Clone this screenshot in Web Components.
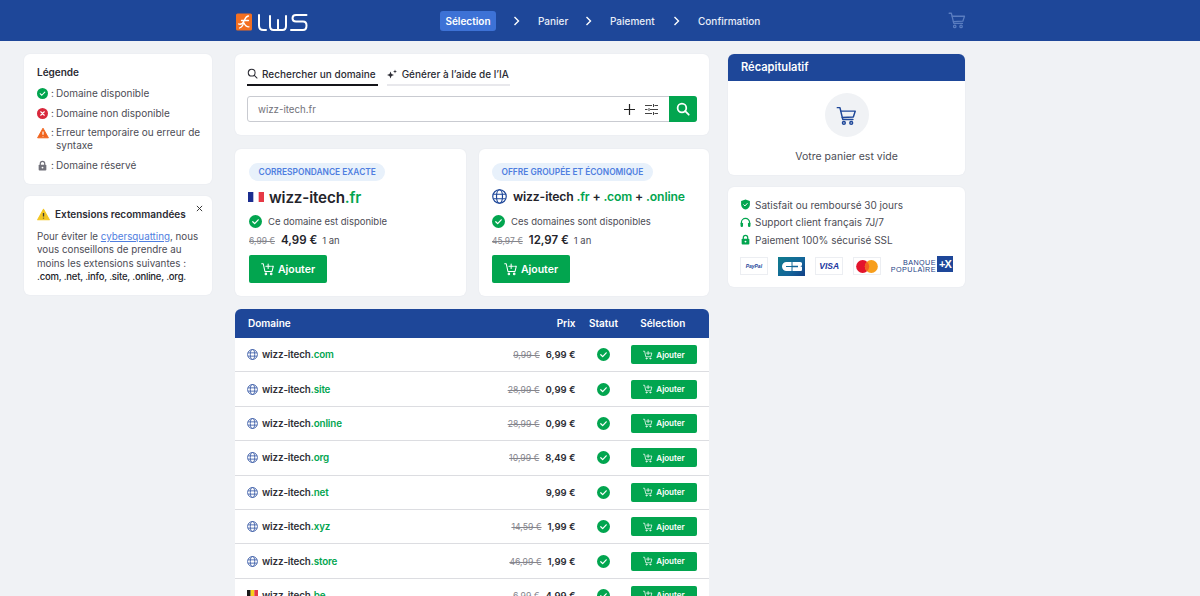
<!DOCTYPE html>
<html lang="fr">
<head>
<meta charset="utf-8">
<title>LWS</title>
<style>
  html, body { margin: 0; height: 596px; overflow: hidden; background: #f0f2f5; }
  body { font-family: Inter, "Liberation Sans", sans-serif; color: #2b2b33; }
  lws-page { height: 596px; overflow: hidden; }
</style>
</head>
<body>
<lws-page>
  <lws-header></lws-header>
  <div slot="left">
    <lws-legend></lws-legend>
    <lws-reco></lws-reco>
  </div>
  <div slot="mid">
    <lws-search></lws-search>
    <lws-offers></lws-offers>
    <lws-table></lws-table>
  </div>
  <div slot="right">
    <lws-recap></lws-recap>
    <lws-trust></lws-trust>
  </div>
</lws-page>

<script>
const GREEN = '#02a54f';
const BLUE = '#1e4799';

const icons = {
  check: s => `<svg width="${s}" height="${s}" viewBox="0 0 20 20"><circle cx="10" cy="10" r="10" fill="${GREEN}"/><path d="M5.8 10.4l2.9 2.8 5.5-5.8" fill="none" stroke="#fff" stroke-width="1.9" stroke-linecap="round" stroke-linejoin="round"/></svg>`,
  cross: s => `<svg width="${s}" height="${s}" viewBox="0 0 20 20"><circle cx="10" cy="10" r="10" fill="#d9283c"/><path d="M6.8 6.8l6.4 6.4M13.2 6.8l-6.4 6.4" stroke="#fff" stroke-width="2" stroke-linecap="round"/></svg>`,
  warn: (s, c) => `<svg width="${s}" height="${s}" viewBox="0 0 20 20"><path d="M10 2L19 18H1z" fill="${c}" stroke="${c}" stroke-width="1.6" stroke-linejoin="round"/><path d="M10 7.5v5.5M10 15v1" stroke="${c === '#f3c623' ? '#3b3b3b' : '#fff'}" stroke-width="2"/></svg>`,
  lock: (s, c) => `<svg width="${s}" height="${s}" viewBox="0 0 20 20"><path d="M6 9V6.5a4 4 0 0 1 8 0V9" fill="none" stroke="${c}" stroke-width="2.2"/><rect x="3" y="8.5" width="14" height="10.5" rx="1.6" fill="${c}"/><circle cx="10" cy="13.8" r="1.7" fill="#fff"/></svg>`,
  globe: (s, c) => `<svg width="${s}" height="${s}" viewBox="0 0 20 20" fill="none" stroke="${c}" stroke-width="1.6"><circle cx="10" cy="10" r="9"/><ellipse cx="10" cy="10" rx="4" ry="9"/><path d="M1.8 7h16.4M1.8 13h16.4"/></svg>`,
  cartPlus: s => `<svg width="${s}" height="${s}" viewBox="0 0 20 20" fill="none" stroke="#fff" stroke-width="1.5" stroke-linecap="round" stroke-linejoin="round"><path d="M1 2.5h2.2l2.4 11h10.2l1.8-7.5h-2.4"/><path d="M10.2 3v6.4M7 6.2h6.4"/><circle cx="7" cy="17" r="1.1"/><circle cx="14.6" cy="17" r="1.1"/></svg>`,
  cart: (s, c) => `<svg width="${s}" height="${s}" viewBox="0 0 24 24" fill="none" stroke="${c}" stroke-width="1.7" stroke-linecap="round" stroke-linejoin="round"><path d="M1.5 3h3l3.2 13.5h11.6"/><path d="M5.6 7h16.4l-2.2 6.6-12.6.6"/><circle cx="9" cy="20.5" r="1.6"/><circle cx="17.4" cy="20.5" r="1.6"/></svg>`,
  search: (s, c, w) => `<svg width="${s}" height="${s}" viewBox="0 0 20 20" fill="none" stroke="${c}" stroke-width="${w}" stroke-linecap="round"><circle cx="8.5" cy="8.5" r="6.2"/><path d="M13.2 13.2l5 5"/></svg>`,
  flagFr: (w, h) => `<svg width="${w}" height="${h}" viewBox="0 0 3 2" preserveAspectRatio="none"><rect width="1" height="2" fill="#1b2d8f"/><rect x="2" width="1" height="2" fill="#e63946"/></svg>`,
  flagBe: (w, h) => `<svg width="${w}" height="${h}" viewBox="0 0 3 2" preserveAspectRatio="none"><rect width="1" height="2" fill="#1a1a1a"/><rect x="1" width="1" height="2" fill="#f7d117"/><rect x="2" width="1" height="2" fill="#e63946"/></svg>`
};

// html gets the element once it is in the page, so it can read its attributes
function define(name, css, html) {
  customElements.define(name, class extends HTMLElement {
    connectedCallback() {
      if (this.shadowRoot) return;
      const root = this.attachShadow({ mode: 'open' });
      root.innerHTML = `<style>${css}</style>${typeof html === 'function' ? html(this) : html}`;
    }
  });
}

const cardCss = `
  :host { display: block; background: #fff; border-radius: 6px; box-shadow: 0 0 2px rgba(30,50,90,.06); }
`;

define('lws-page', `
  :host { display: block; }
  .cols { display: flex; padding: 13px 0 0 24px; align-items: flex-start; }
  .l { width: 188px; margin-right: 23px; }
  .m { width: 474px; margin-right: 19px; }
  .r { width: 237px; }
`, `
  <slot></slot>
  <div class="cols">
    <div class="l"><slot name="left"></slot></div>
    <div class="m"><slot name="mid"></slot></div>
    <div class="r"><slot name="right"></slot></div>
  </div>
`);

define('lws-header', `
  :host { display: flex; align-items: center; height: 41px; background: ${BLUE}; color: #fff; padding-left: 235px; font-size: 10px; font-weight: 500; box-sizing: border-box; width: 1200px; }
  .logo { width: 73px; height: 20px; display: block; margin-right: 132px; }
  nav { display: flex; align-items: center; }
  .step { color: #e8edf7; white-space: nowrap; }
  .on { background: #3d72d6; color: #fff; font-weight: 600; border-radius: 3px; height: 20px; width: 56px; display: flex; align-items: center; justify-content: center; }
  .chev { width: 8px; height: 10px; margin: 0 17px 0 17px; display: block; }
  .bag { margin-left: 187px; display: block; }
`, () => {
  const chev = `<svg class="chev" viewBox="0 0 8 10" fill="none" stroke="#fff" stroke-width="1.4"><path d="M1.5 1l4 4-4 4"/></svg>`;
  return `
  <svg class="logo" viewBox="0 0 73 20">
    <rect x="1" y="2.500" width="16" height="17" rx="1.500" fill="#f36f21"/>
    <path d="M3.500 13c2.500.8 4.300-.5 5.500-3s2-5 4.500-5M6.500 9.500h7M8.500 10.500c0 3-1.200 5.500-4 6.500M9 12c1 2.500 2.500 3.800 5 3.800" fill="none" stroke="#fff" stroke-width="1.300" stroke-linecap="round"/>
    <g fill="none" stroke="#fff" stroke-width="2" stroke-linecap="round" stroke-linejoin="round">
      <path d="M24 4v10.500c0 3 1.500 4.500 4.500 4.500H31"/>
      <path d="M35 5v10c0 2.500 1.200 4 3.500 4h9c2.300 0 3.500-1.500 3.500-4V5M43 9v10"/>
      <path d="M71.500 4H61c-2.200 0-3.500 1-3.500 3.300s1.300 3.200 3.500 3.200h7c2.200 0 3.500 1 3.500 4s-1.300 4.500-3.500 4.500H56"/>
    </g>
  </svg>
  <nav>
    <div class="step on">Sélection</div>${chev}
    <div class="step" style="width:30px">Panier</div>${chev}
    <div class="step" style="width:46px">Paiement</div>${chev}
    <div class="step" style="width:63px">Confirmation</div>
  </nav>
  <div class="bag">${icons.cart(18, '#5a7dc0')}</div>`;
});

define('lws-legend', cardCss + `
  :host { padding: 12px 10px 10px 13px; height: 130px; box-sizing: border-box; font-size: 10px; color: #4c4c55; }
  h3 { margin: 0 0 8px; font-size: 10px; font-weight: 600; color: #2b2b33; line-height: 13px; }
  .r { display: flex; line-height: 13px; margin-bottom: 6.5px; }
  .r:last-child { margin-bottom: 0; }
  .i { flex: none; width: 11px; height: 11px; margin-top: 1px; display: block; }
  .i svg { display: block; }
  .c { flex: none; width: 8px; padding-left: 3px; box-sizing: border-box; }
  .c + span { flex: 1; }
`, `
  <h3>Légende</h3>
  <div class="r"><span class="i">${icons.check(11)}</span><span class="c">:</span><span>Domaine disponible</span></div>
  <div class="r"><span class="i">${icons.cross(11)}</span><span class="c">:</span><span>Domaine non disponible</span></div>
  <div class="r"><span class="i">${icons.warn(12, '#f0641e')}</span><span class="c">:</span><span>Erreur temporaire ou erreur de syntaxe</span></div>
  <div class="r"><span class="i">${icons.lock(11, '#71717a')}</span><span class="c">:</span><span>Domaine réservé</span></div>
`);

define('lws-reco', cardCss + `
  :host { position: relative; margin-top: 12px; padding: 12px 10px 0 13px; height: 99px; box-sizing: border-box; font-size: 9.8px; line-height: 13.300px; color: #4c4c55; }
  h3 { margin: 0 0 9px; font-size: 10px; font-weight: 600; color: #2b2b33; display: flex; align-items: center; gap: 5px; line-height: 13px; }
  h3 svg { display: block; }
  p { margin: 0; }
  a { color: #4f7ee0; text-decoration: underline; }
  b { font-weight: 500; font-size: 9.5px; color: #232329; letter-spacing: -.2px; white-space: nowrap; }
  .x { position: absolute; top: 9px; right: 9px; display: block; }
`, `
  <svg class="x" width="7" height="7" viewBox="0 0 8 8"><path d="M1 1l6 6M7 1L1 7" stroke="#333" stroke-width="1.1"/></svg>
  <h3>${icons.warn(13, '#f3c623')}Extensions recommandées</h3>
  <p>Pour éviter le <a>cybersquatting</a>, nous vous conseillons de prendre au moins les extensions suivantes : <b>.com, .net, .info, .site, .online, .org.</b></p>
`);

define('lws-search', cardCss + `
  :host { padding: 9px 12px 0; height: 81px; box-sizing: border-box; }
  .tabs { display: flex; gap: 9px; font-size: 10px; font-weight: 500; color: #2b2b33; }
  .tab { display: flex; align-items: center; gap: 5px; height: 21px; border-bottom: 2px solid #e8e8ec; padding: 0 1px 0 0; }
  .tab.on { border-bottom-color: #15151a; padding-right: 2px; gap: 4px; }
  .tab svg { display: block; }
  .box { margin-top: 10px; height: 26px; display: flex; align-items: center; border: 1px solid #c9cbd1; border-radius: 3px; box-sizing: border-box; font-size: 9.7px; color: #72727a; padding-left: 10px; }
  .txt { flex: 1; }
  .tools { display: flex; align-items: center; gap: 10px; margin-right: 11px; }
  .tools svg { display: block; }
  .go { width: 28px; height: 26px; margin: -1px -1px -1px 0; background: ${GREEN}; border-radius: 0 3px 3px 0; display: flex; align-items: center; justify-content: center; }
`, `
  <div class="tabs">
    <div class="tab on">${icons.search(11, '#2b2b33', 1.9)}Rechercher un domaine</div>
    <div class="tab"><svg width="10" height="10" viewBox="0 0 10 10" fill="#2b2b33"><path d="M3.500 2.500l1 2.500 2.500 1-2.500 1-1 2.500-1-2.500L0 6l2.500-1zM8 .5l.5 1.500 1.500.5-1.500.5L8 4.500 7.500 3 6 2.500 7.500 2z"/></svg>Générer à l’aide de l’IA</div>
  </div>
  <div class="box">
    <span class="txt">wizz-itech.fr</span>
    <span class="tools">
      <svg width="11" height="11" viewBox="0 0 11 11"><path d="M5.500 0v11M0 5.500h11" stroke="#222" stroke-width="1.2"/></svg>
      <svg width="13" height="11" viewBox="0 0 13 11" fill="none" stroke="#444" stroke-width="1"><path d="M0 1.500h7M9.500 1.500H13M8.500 0v3M0 5.500h2.500M5 5.500h8M4 4v3M0 9.500h7M9.500 9.500H13M8.500 8v3"/></svg>
    </span>
    <span class="go">${icons.search(14, '#fff', 2.5)}</span>
  </div>
`);

define('lws-offers', `
  :host { display: grid; grid-template-columns: 231px 230px; column-gap: 13px; margin-top: 14px; }
`, `<lws-offer kind="exact"></lws-offer><lws-offer kind="group"></lws-offer>`);

define('lws-offer', cardCss + `
  :host { height: 147px; box-sizing: border-box; padding: 14px 13px 0 14px; font-size: 9.5px; color: #4c4c55; }
  :host([kind="group"]) { padding-left: 13px; }
  .pill { display: inline-block; height: 18px; line-height: 18px; background: #e8f1fb; color: #4f7ee0; font-size: 8.4px; font-weight: 600; border-radius: 9px; padding: 0 9.500px; white-space: nowrap; }
  .name { display: flex; align-items: center; color: #23232a; font-weight: 600; letter-spacing: -.15px; white-space: nowrap; height: 20px; margin-top: 6px; }
  .name svg { display: block; }
  .name em { font-style: normal; color: ${GREEN}; }
  .avail { display: flex; align-items: center; gap: 6px; height: 14px; margin-top: 7px; font-size: 9.5px; }
  .avail svg { display: block; }
  .price { display: flex; align-items: baseline; height: 16px; margin-top: 5px; }
  s { font-size: 8.5px; color: #85858c; }
  strong { font-size: 11.5px; font-weight: 600; color: #23232a; margin: 0 5px 0 6px; }
  .add { margin-top: 6px; width: 78px; height: 28px; background: ${GREEN}; color: #fff; border-radius: 2px; display: flex; align-items: center; justify-content: center; gap: 3px; font-size: 10.5px; font-weight: 600; }
  .add svg { display: block; }
`, el => {
  const exact = el.getAttribute('kind') === 'exact';
  return `
    <span class="pill">${exact ? 'CORRESPONDANCE EXACTE' : 'OFFRE GROUPÉE ET ÉCONOMIQUE'}</span>
    ${exact
      ? `<div class="name" style="font-size:15.2px"><span style="margin-left:-1px">${icons.flagFr(16, 10)}</span><span style="margin-left:5px">wizz-itech<em>.fr</em></span></div>`
      : `<div class="name" style="font-size:12.2px;transform:translateY(-1px)">${icons.globe(15, BLUE)}<span style="margin-left:6px">wizz-itech <em>.fr</em> + <em>.com</em> + <em>.online</em></span></div>`}
    <div class="avail">${icons.check(13)}${exact ? 'Ce domaine est disponible' : 'Ces domaines sont disponibles'}</div>
    <div class="price"><s>${exact ? '6,99 €' : '45,97 €'}</s><strong>${exact ? '4,99 €' : '12,97 €'}</strong><span>1 an</span></div>
    <div class="add">${icons.cartPlus(14)}Ajouter</div>`;
});

define('lws-table', `
  :host { display: block; margin-top: 13px; background: #fff; border-radius: 6px 6px 0 0; }
  .hd { display: grid; grid-template-columns: 1fr 50px 68.5px; align-items: center; height: 29px; padding: 0 12px 1px 13px; box-sizing: border-box; background: ${BLUE}; color: #fff; font-size: 10px; font-weight: 600; border-radius: 6px 6px 0 0; }
  .left { display: flex; justify-content: space-between; padding-right: 3px; }
  .hd div:nth-child(2), .hd div:nth-child(3) { text-align: center; }
`, `
  <div class="hd"><div class="left"><span>Domaine</span><span>Prix</span></div><div>Statut</div><div>Sélection</div></div>
  <lws-row name="com" old="9,99 €" price="6,99 €"></lws-row>
  <lws-row name="site" old="28,99 €" price="0,99 €"></lws-row>
  <lws-row name="online" old="28,99 €" price="0,99 €"></lws-row>
  <lws-row name="org" old="10,99 €" price="8,49 €"></lws-row>
  <lws-row name="net" price="9,99 €"></lws-row>
  <lws-row name="xyz" old="14,59 €" price="1,99 €"></lws-row>
  <lws-row name="store" old="46,99 €" price="1,99 €"></lws-row>
  <lws-row name="be" old="6,99 €" price="4,99 €" flag="be"></lws-row>
`);

define('lws-row', `
  :host { display: grid; grid-template-columns: 1fr 50px 68.5px; align-items: center; height: 34.4px; box-sizing: border-box; padding: 0 12px 0 12px; border-bottom: 1px solid #dcdde1; background: #fff; font-size: 9.8px; }
  .main { display: flex; align-items: center; padding-right: 3px; }
  .d { display: flex; align-items: center; gap: 4px; font-weight: 600; letter-spacing: -.12px; color: #2f2f37; white-space: nowrap; }
  .d svg { display: block; flex: none; }
  .d em { font-style: normal; color: ${GREEN}; }
  .pr { display: flex; justify-content: flex-end; align-items: baseline; flex: 1; }
  s { font-size: 8.7px; color: #85858c; margin-right: 6px; }
  b { font-weight: 600; color: #2b2b33; font-size: 9.5px; }
  .st { display: flex; justify-content: center; }
  .st svg { display: block; }
  .sel { display: flex; justify-content: flex-end; }
  .add { height: 19px; width: 66px; background: ${GREEN}; color: #fff; border-radius: 2px; display: flex; align-items: center; justify-content: center; gap: 3px; font-size: 8px; font-weight: 600; }
  .add svg { display: block; }
`, el => {
  const old = el.getAttribute('old');
  const ic = el.getAttribute('flag') === 'be' ? icons.flagBe(11, 11) : icons.globe(11, '#3d5ea8');
  return `
    <div class="main">
      <div class="d">${ic}<span>wizz-itech<em>.${el.getAttribute('name')}</em></span></div>
      <div class="pr">${old ? `<s>${old}</s>` : ''}<b>${el.getAttribute('price')}</b></div>
    </div>
    <div class="st">${icons.check(13)}</div>
    <div class="sel"><div class="add">${icons.cartPlus(10)}Ajouter</div></div>`;
});

define('lws-recap', cardCss + `
  :host { overflow: hidden; height: 121px; }
  .hd { height: 27px; background: ${BLUE}; color: #fff; font-size: 11.1px; font-weight: 600; line-height: 27px; padding-left: 13px; }
  .c { width: 44px; height: 44px; border-radius: 50%; background: #f0f2f5; margin: 12px auto 0; display: flex; align-items: center; justify-content: center; }
  .c svg { display: block; }
  p { margin: 13px 0 0; text-align: center; font-size: 10.5px; line-height: 13px; color: #4c4c55; }
`, `
  <div class="hd">Récapitulatif</div>
  <div class="c">${icons.cart(21, BLUE)}</div>
  <p>Votre panier est vide</p>
`);

define('lws-trust', cardCss + `
  :host { margin-top: 12px; height: 100px; box-sizing: border-box; padding: 9px 12px 0; font-size: 10px; color: #4c4c55; }
  .r { display: flex; align-items: center; gap: 4px; height: 17.5px; }
  .r svg { display: block; }
  .logos { display: flex; align-items: center; margin-top: 8px; height: 19px; }
  .pm { width: 28px; height: 18px; box-sizing: border-box; border: 1px solid #eceef2; display: flex; align-items: center; justify-content: center; margin-right: 10px; font-family: "Liberation Sans", sans-serif; white-space: nowrap; }
  .pp { font-size: 5px; font-weight: 700; font-style: italic; color: #1e4799; }
  .cb { background: linear-gradient(135deg, #0f7c8c, #14659a 60%, #123f86); border: 0; height: 19px; }
  .visa { font-size: 8.5px; font-weight: 700; color: #2137a0; font-style: italic; }
  .bp { display: flex; align-items: center; font-family: "Liberation Sans", sans-serif; font-size: 7.2px; line-height: 7px; letter-spacing: .45px; color: #1e3f86; text-align: right; }
  .bpx { width: 16px; height: 16px; background: #1e4799; color: #fff; font-size: 11px; font-weight: 700; letter-spacing: -1px; display: flex; align-items: center; justify-content: center; margin-left: 1px; transform: translateY(-2px); }
`, `
  <div class="r"><svg width="11" height="11" viewBox="0 0 20 20"><path d="M10 .8l8 3v6c0 4.800-3.400 8-8 9.400-4.600-1.400-8-4.600-8-9.400v-6z" fill="${GREEN}"/><path d="M6.300 10l2.700 2.600 4.600-5" fill="none" stroke="#fff" stroke-width="1.800"/></svg>Satisfait ou remboursé 30 jours</div>
  <div class="r"><svg width="11" height="11" viewBox="0 0 20 20" fill="none" stroke="${GREEN}" stroke-width="2.200"><path d="M2.500 13V10a7.500 7.500 0 0 1 15 0v3"/><rect x="1" y="10.500" width="4.500" height="7.500" rx="1.500" fill="${GREEN}" stroke="none"/><rect x="14.500" y="10.500" width="4.500" height="7.500" rx="1.500" fill="${GREEN}" stroke="none"/></svg>Support client français 7J/7</div>
  <div class="r">${icons.lock(11, GREEN)}Paiement 100% sécurisé SSL</div>
  <div class="logos">
    <div class="pm pp">PayPal</div>
    <div class="pm cb"><svg width="20" height="9" viewBox="0 0 20 9" fill="#fff"><path d="M9.500 0H4.500a4.500 4.500 0 0 0 0 9h5V5H4V4h5.500zM10.500 0H18a2 2 0 0 1 0 4.200 2 2 0 0 1 0 4.800h-7.500V5.300H16V3.800h-5.500z"/></svg></div>
    <div class="pm visa">VISA</div>
    <div class="pm"><svg width="22" height="13" viewBox="0 0 20 12"><circle cx="6" cy="6" r="6" fill="#e3142c"/><circle cx="14" cy="6" r="6" fill="#f79e1b"/><path d="M10 1.500a6 6 0 0 1 0 9 6 6 0 0 1 0-9z" fill="#f26122"/></svg></div>
    <div class="bp"><span>BANQUE<br>POPULAIRE</span><span class="bpx">+X</span></div>
  </div>
`);
</script>
</body>
</html>
